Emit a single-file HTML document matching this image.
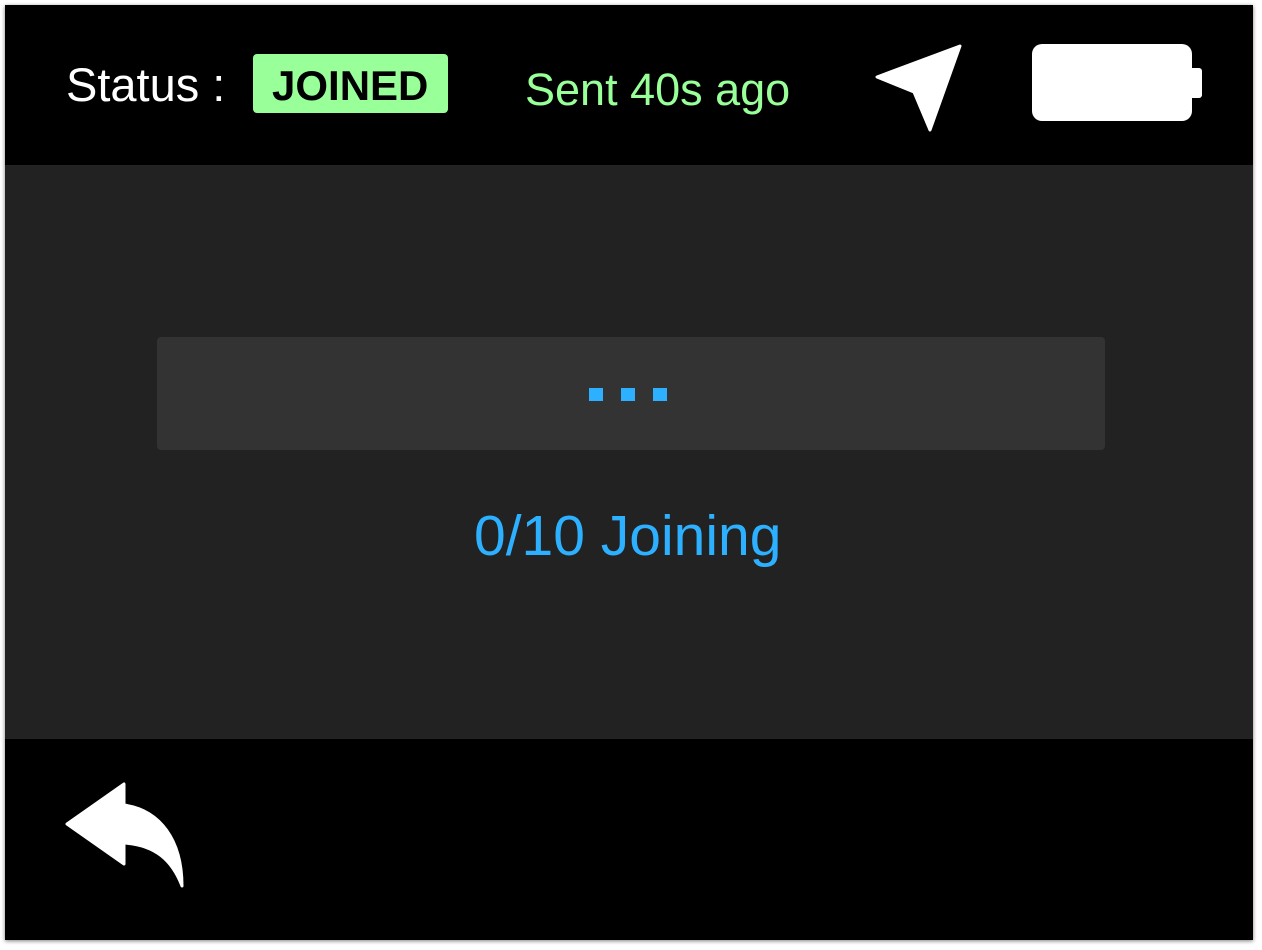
<!DOCTYPE html>
<html><head><meta charset="utf-8"><style>
html,body{margin:0;padding:0;width:1262px;height:950px;background:#fff;overflow:hidden;font-family:"Liberation Sans",sans-serif}
.dev{position:absolute;left:5px;top:5px;width:1248px;height:935px;background:#000;box-shadow:0 1px 4px rgba(0,0,0,.5)}
.mid{position:absolute;left:5px;top:165px;width:1248px;height:574px;background:#222}
.t{position:absolute;white-space:nowrap;line-height:1}
.box{position:absolute;left:157px;top:337px;width:948px;height:113px;background:#333;border-radius:4px}
.dot{position:absolute;top:388px;width:14px;height:13px;background:#2db0ff}
</style></head><body>
<div class="dev"></div>
<div class="mid"></div>
<div class="t" style="left:66px;top:61px;font-size:47px;color:#fff">Status :</div>
<div style="position:absolute;left:253px;top:54px;width:195px;height:59px;background:#9f9;border-radius:4px"></div>
<div class="t" style="left:272px;top:65px;font-size:42px;font-weight:bold;color:#000">JOINED</div>
<div class="t" style="left:525px;top:67px;font-size:45px;color:#9f9">Sent 40s ago</div>
<svg style="position:absolute;left:0;top:0" width="1262" height="950">
<path d="M960,46 L877,77 L914,92 L930,130 Z" fill="#fff" stroke="#fff" stroke-width="3" stroke-linejoin="round"/>
<rect x="1032" y="44" width="160" height="77" rx="10" fill="#fff"/>
<rect x="1188" y="68" width="14" height="30" rx="3" fill="#fff"/>
<path d="M67,824 L124,784 L124,805 C160,810 182,840 182,886 C172,860 155,845 124,843 L124,864 Z" fill="#fff" stroke="#fff" stroke-width="3" stroke-linejoin="round"/>
</svg>
<div class="box"></div>
<div class="dot" style="left:589px"></div>
<div class="dot" style="left:621px"></div>
<div class="dot" style="left:653px"></div>
<div class="t" style="left:474px;top:508px;font-size:57px;color:#2db0ff">0/10 Joining</div>
</body></html>
